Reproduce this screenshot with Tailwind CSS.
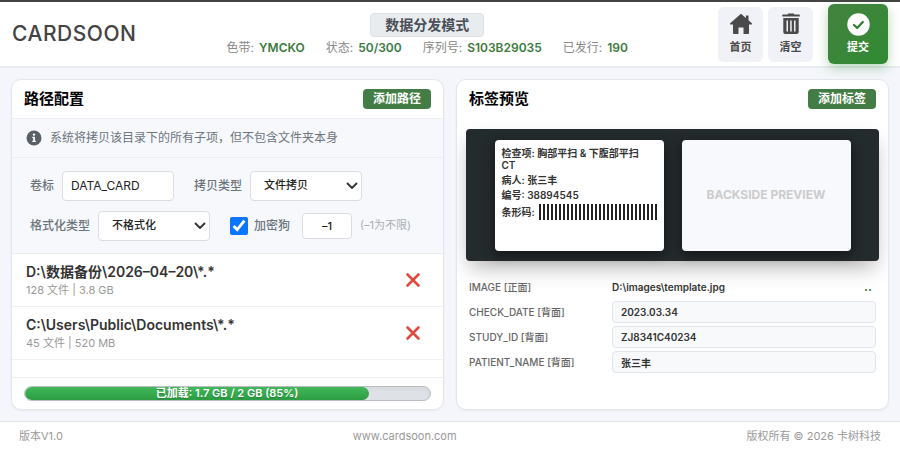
<!DOCTYPE html>
<html lang="zh-CN">
<head>
    <meta charset="UTF-8">
    <meta name="viewport" content="width=device-width, initial-scale=1.0">
    <title>CARDSOON 数据分发模式</title>
    <script src="https://cdn.jsdelivr.net/npm/@tailwindcss/browser@4"></script>
    <style>
        body { font-family: 'Inter', 'Noto Sans CJK SC', sans-serif; }
        .barcode { background: repeating-linear-gradient(90deg, #222 0 2px, #fff 2px 4px); }
    </style>
</head>
<body class="min-h-screen flex flex-col bg-[#f4f6fb] text-[#333]">
    <header class="h-[68px] flex items-center justify-between px-3 bg-white border-t-2 border-t-[#444] border-b-2 border-b-[#e9ebf3]">
        <h1 class="text-[21px] font-medium tracking-wide text-[#444]">CARDSOON</h1>
        <div class="flex flex-col items-center gap-[3px]">
            <div class="h-6 px-[14px] flex items-center rounded border border-[#dee2e6] bg-[#e9ecef] text-sm font-bold text-[#495057]">数据分发模式</div>
            <dl class="flex gap-[21px] text-xs leading-4 text-[#888]">
                <div class="flex gap-[5px]"><dt>色带:</dt><dd class="font-semibold text-[#3c7a40]">YMCKO</dd></div>
                <div class="flex gap-[5px]"><dt>状态:</dt><dd class="font-semibold text-[#3c7a40]">50/300</dd></div>
                <div class="flex gap-[5px]"><dt>序列号:</dt><dd class="font-semibold text-[#3c7a40]">S103B29035</dd></div>
                <div class="flex gap-[5px]"><dt>已发行:</dt><dd class="font-semibold text-[#3c7a40]">190</dd></div>
            </dl>
        </div>
        <div class="flex items-center gap-[5px]">
            <button type="button" class="w-[45px] h-[55px] flex flex-col items-center justify-center gap-1 rounded-md bg-[#f1f2f7] text-[11px] leading-4 font-bold text-[#4a4a4a]">
                <svg class="w-6 h-[22px]" viewBox="0 0 24 22" fill="currentColor"><path d="M12 .8 1.2 10.2c-.5.5-.2 1.3.5 1.3H4v8.400c0 .7.500 1.100 1.100 1.100h4.400v-6.500h5v6.500h4.400c.7 0 1.100-.4 1.100-1.100v-8.400h2.300c.7 0 1-.8.5-1.300L19.500 7.300V2.500h-2.600V5z"/></svg>
                首页
            </button>
            <button type="button" class="w-[45px] h-[55px] flex flex-col items-center justify-center gap-1 rounded-md bg-[#f1f2f7] text-[11px] leading-4 font-bold text-[#4a4a4a]">
                <svg class="w-[18px] h-[22px]" viewBox="0 0 18 22" fill="currentColor"><path d="M5.500 1.500 6.300.5h5.400l.8 1H17c.5 0 .8.3.8.8v1.200H.2V2.300c0-.5.3-.8.8-.8z"/><path fill-rule="evenodd" d="M1.300 5h15.400v14c0 1.300-.8 2-2 2H3.300c-1.200 0-2-.7-2-2zM4.500 7.500v11h1.500v-11zM8.200 7.500v11h1.500v-11zM12 7.500v11h1.500v-11z"/></svg>
                清空
            </button>
            <button type="button" class="ml-[10px] w-[60px] h-[60px] flex flex-col items-center justify-center gap-[3px] rounded-md bg-linear-to-br from-[#43823f] to-[#2e8b32] shadow-[0_4px_12px_rgba(46,139,50,0.35)] text-[11px] leading-4 font-bold text-white">
                <svg class="w-[23px] h-[23px]" viewBox="0 0 23 23"><circle cx="11.500" cy="11.500" r="11.200" fill="#fff"/><path d="m7 12 3.200 3 5.600-6" fill="none" stroke="#2e7d32" stroke-width="2.200" stroke-linecap="round" stroke-linejoin="round"/></svg>
                提交
            </button>
        </div>
    </header>

    <main class="flex-1 grid grid-cols-2 gap-3 p-[11px]">
        <section class="flex flex-col rounded-[10px] border border-[#e3e6ee] bg-white overflow-hidden shadow-xs">
            <div class="h-[38px] flex items-center justify-between px-3">
                <h2 class="text-[15px] font-bold text-black">路径配置</h2>
                <button type="button" class="h-5 px-[10px] rounded bg-[#437d45] text-xs leading-5 font-bold text-white">添加路径</button>
            </div>
            <p class="h-10 flex items-center gap-2 px-[14px] border-y border-[#eceef2] bg-[#f7f8fb] text-xs text-[#6c757d]">
                <svg class="w-4 h-4" viewBox="0 0 16 16"><circle cx="8" cy="8" r="7.500" fill="#596067"/><path d="M6.300 6.800h2.600v4h1v1.300H6.200v-1.300h1V8.100h-.9z" fill="#fff"/><circle cx="8" cy="4.600" r="1.200" fill="#fff"/></svg>
                系统将拷贝该目录下的所有子项，但不包含文件夹本身
            </p>
            <form class="h-24 flex flex-col justify-center gap-[10px] px-[18px] border-b border-[#e9ebef] bg-[#f7f8fb] text-xs font-medium text-[#6c757d]">
                <div class="flex items-center gap-2">
                    <label for="volume">卷标</label>
                    <input id="volume" type="text" value="DATA_CARD" class="w-[112px] h-[30px] px-2 rounded border border-[#d9dce2] bg-white font-normal text-[#222]">
                    <label for="copyType" class="ml-3">拷贝类型</label>
                    <div class="relative w-[112px] h-[30px]">
                        <select id="copyType" class="w-full h-full pl-[13px] appearance-none rounded border border-[#d9dce2] bg-white text-[11px] text-[#222]">
                            <option>文件拷贝</option>
                        </select>
                        <svg class="absolute right-1 top-[11px] w-3 h-2 pointer-events-none" viewBox="0 0 12 8"><path d="m1.500 1.500 4.500 4.500 4.500-4.500" fill="none" stroke="#333" stroke-width="1.800" stroke-linecap="round" stroke-linejoin="round"/></svg>
                    </div>
                </div>
                <div class="flex items-center gap-2">
                    <label for="formatType">格式化类型</label>
                    <div class="relative w-[112px] h-[30px]">
                        <select id="formatType" class="w-full h-full pl-[13px] appearance-none rounded border border-[#d9dce2] bg-white text-[11px] text-[#222]">
                            <option>不格式化</option>
                        </select>
                        <svg class="absolute right-1 top-[11px] w-3 h-2 pointer-events-none" viewBox="0 0 12 8"><path d="m1.500 1.500 4.500 4.500 4.500-4.500" fill="none" stroke="#333" stroke-width="1.800" stroke-linecap="round" stroke-linejoin="round"/></svg>
                    </div>
                    <label class="ml-3 mr-1 flex items-center gap-[6px]"><input type="checkbox" checked class="w-[18px] h-[18px] accent-[#0a75ff]">加密狗</label>
                    <input type="text" value="–1" aria-label="加密狗次数" class="w-[50px] h-[26px] rounded border border-[#d9dce2] bg-white text-center text-[11px] text-[#222]">
                    <span class="text-[11px] font-normal text-[#a9afb6]">(–1为不限)</span>
                </div>
            </form>
            <ul class="flex-1">
                <li class="h-[53px] flex items-center justify-between pl-[14px] pr-[22px] border-b border-[#f0f1f4]">
                    <div>
                        <p class="text-sm leading-5 font-semibold">D:\数据备份\2026–04–20\*.*</p>
                        <p class="text-[11px] leading-4 text-[#999]">128 文件 | 3.8 GB</p>
                    </div>
                    <button type="button" aria-label="删除" class="w-4 h-4"><svg viewBox="0 0 16 16"><path d="m2.500 2.500 11 11m0-11-11 11" stroke="#e04a3f" stroke-width="2.600" stroke-linecap="round"/></svg></button>
                </li>
                <li class="h-[53px] flex items-center justify-between pl-[14px] pr-[22px] border-b border-[#f0f1f4]">
                    <div>
                        <p class="text-sm leading-5 font-semibold">C:\Users\Public\Documents\*.*</p>
                        <p class="text-[11px] leading-4 text-[#999]">45 文件 | 520 MB</p>
                    </div>
                    <button type="button" aria-label="删除" class="w-4 h-4"><svg viewBox="0 0 16 16"><path d="m2.500 2.500 11 11m0-11-11 11" stroke="#e04a3f" stroke-width="2.600" stroke-linecap="round"/></svg></button>
                </li>
            </ul>
            <div class="h-8 flex items-center px-3 border-t border-[#eceef2]">
                <div class="w-full h-[15px] rounded-full border border-[#b9bdc3] bg-[#dee2e6] shadow-inner overflow-hidden">
                    <div class="h-full rounded-full bg-linear-to-b from-[#42b85a] to-[#2c9c43] text-center text-[11px] leading-[13px] font-semibold text-white text-shadow-sm pl-[60px]" style="width: 85%">已加载: 1.7 GB / 2 GB (85%)</div>
                </div>
            </div>
        </section>

        <section class="flex flex-col rounded-[10px] border border-[#e3e6ee] bg-white overflow-hidden shadow-xs">
            <div class="h-[38px] flex items-center justify-between px-3">
                <h2 class="text-[15px] font-bold text-black">标签预览</h2>
                <button type="button" class="h-5 px-[10px] rounded bg-[#437d45] text-xs leading-5 font-bold text-white">添加标签</button>
            </div>
            <div class="mt-[11px] mx-[9px] h-[132px] flex items-center justify-center gap-[18px] rounded bg-[#242b2d] shadow-[0_10px_20px_-4px_rgba(0,0,0,0.3)]">
                <div class="w-[169px] h-[111px] p-[7px] flex flex-col gap-[3px] rounded bg-white shadow-[0_4px_12px_rgba(0,0,0,0.5)] text-[10px] leading-3 font-semibold">
                    <p class="pr-2">检查项: 胸部平扫 &amp; 下腹部平扫 CT</p>
                    <p>病人: 张三丰</p>
                    <p>编号: 38894545</p>
                    <p class="flex items-center gap-1">条形码: <span class="barcode flex-1 h-4"></span></p>
                </div>
                <div class="w-[169px] h-[111px] flex items-center justify-center rounded bg-[#f8f9fc] shadow-[0_4px_12px_rgba(0,0,0,0.5)] text-xs font-bold text-[#ccc]">BACKSIDE PREVIEW</div>
            </div>
            <div class="mt-[15px] mx-3 grid grid-cols-[143px_1fr] gap-y-[3px] items-center text-[10px] font-medium text-[#666]">
                <span>IMAGE [正面]</span>
                <div class="h-[22px] flex items-center justify-between pr-1 font-semibold text-[#333]">D:\images\template.jpg<button type="button" class="text-xs font-bold text-[#437d45]">..</button></div>
                <label for="checkDate">CHECK_DATE [背面]</label>
                <input id="checkDate" type="text" value="2023.03.34" class="w-full h-[22px] px-2 rounded border border-[#e1e4ea] bg-[#f8f9fb] font-semibold text-[#333]">
                <label for="studyId">STUDY_ID [背面]</label>
                <input id="studyId" type="text" value="ZJ8341C40234" class="w-full h-[22px] px-2 rounded border border-[#e1e4ea] bg-[#f8f9fb] font-semibold text-[#333]">
                <label for="patientName">PATIENT_NAME [背面]</label>
                <input id="patientName" type="text" value="张三丰" class="w-full h-[22px] px-2 rounded border border-[#e1e4ea] bg-[#f8f9fb] font-semibold text-[#333]">
            </div>
        </section>
    </main>

    <footer class="h-[29px] flex items-center justify-between px-[19px] border-t border-[#e1e4ea] bg-white text-[11px] text-[#999]">
        <span>版本V1.0</span>
        <span>www.cardsoon.com</span>
        <span>版权所有 © 2026 卡树科技</span>
    </footer>
</body>
</html>
